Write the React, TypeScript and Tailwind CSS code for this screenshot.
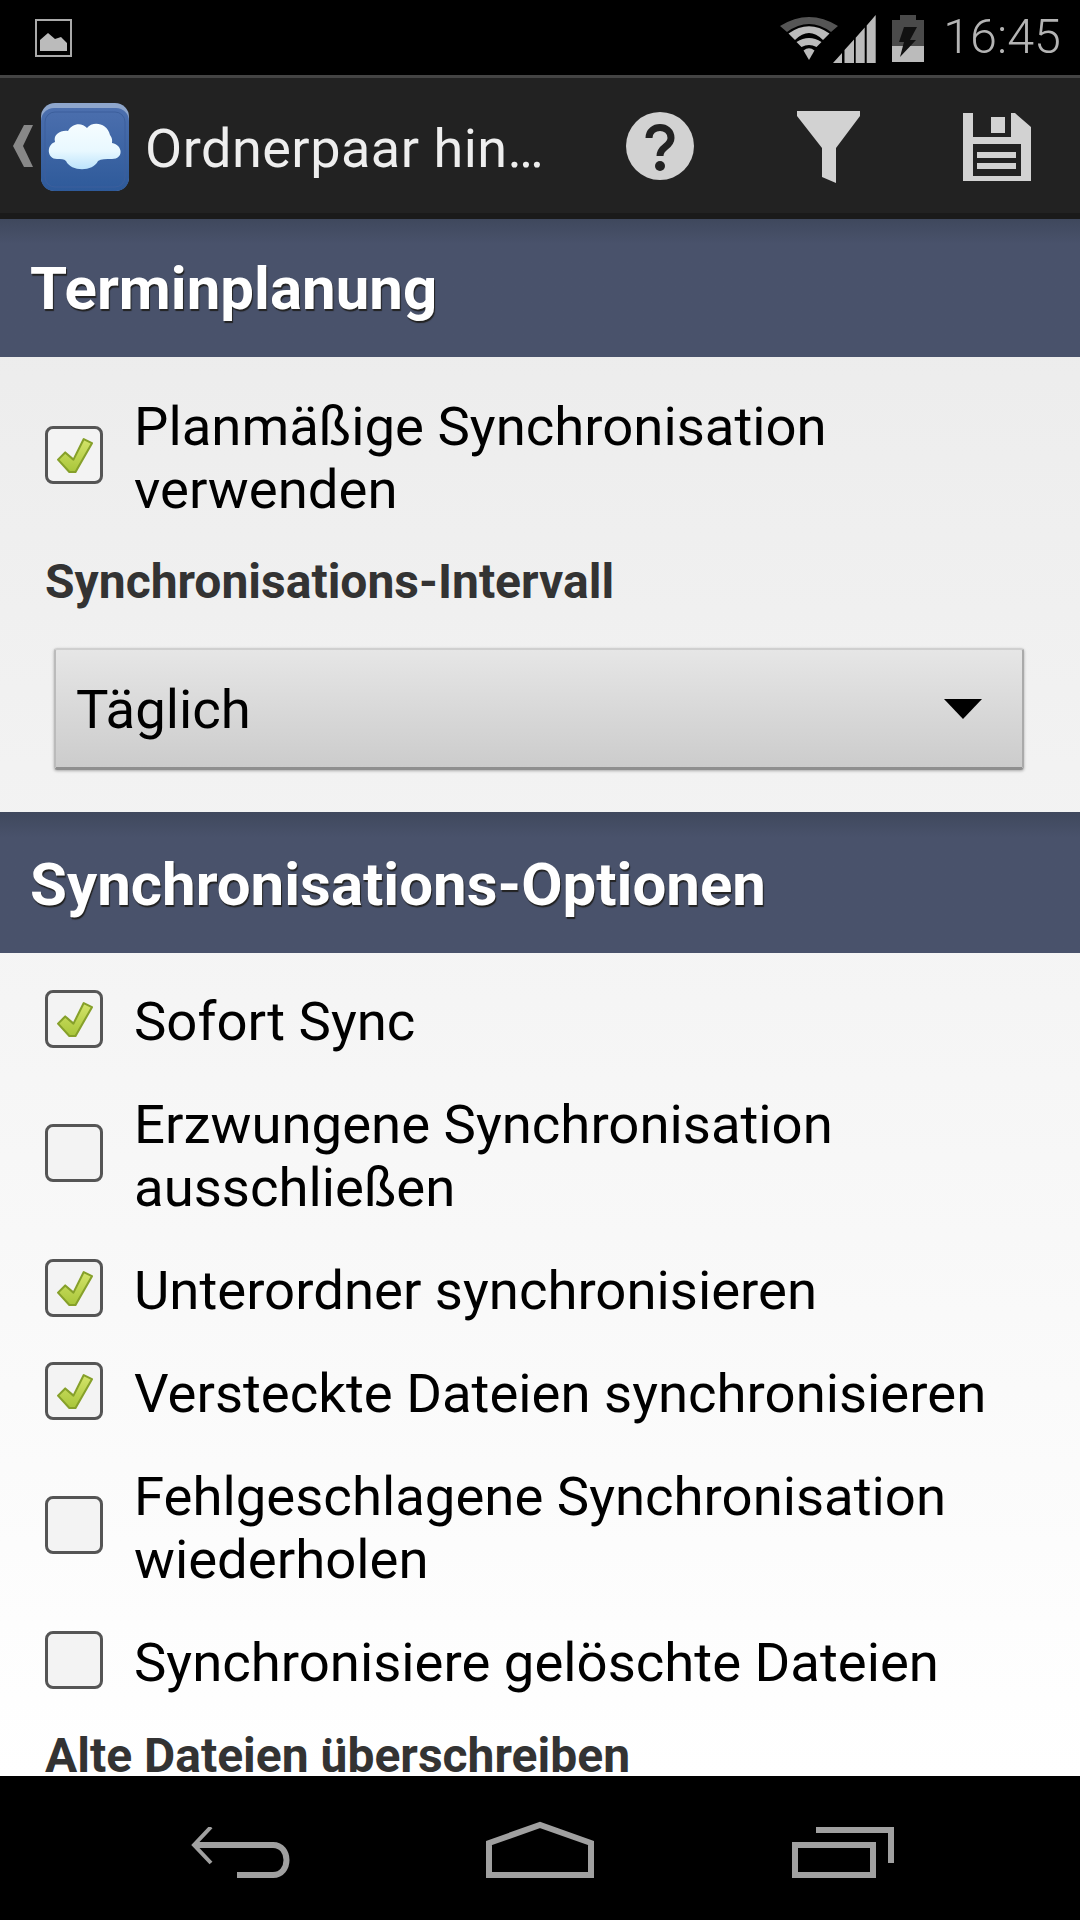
function CheckBox({ checked }: { checked?: boolean }) {
  return (
    <div className="w-[58px] h-[58px] mb-[6px] shrink-0 rounded-[8px] border-[3px] border-[#555] bg-[#f3f3f3] flex items-center justify-center">
      {checked && (
        <svg width="36" height="36" viewBox="0 0 35 35" className="ml-[1px]">
          <defs>
            <linearGradient id="chk" x1="0" y1="0" x2="0" y2="1">
              <stop offset="0" stopColor="#d4e46a" />
              <stop offset="1" stopColor="#a9c63a" />
            </linearGradient>
          </defs>
          <path
            d="M1 22 L8 15 L16 22 L26 2 L34 6 L18 34 L12 34 Z"
            fill="url(#chk)"
            stroke="#86a02a"
            strokeWidth="2"
            strokeLinejoin="round"
          />
        </svg>
      )}
    </div>
  );
}

function Row({ checked, lines }: { checked?: boolean; lines: string[] }) {
  return (
    <div className={`flex items-center gap-[31px] pl-[45px] ${lines.length > 1 ? "h-[166px]" : "h-[103px]"}`}>
      <CheckBox checked={checked} />
      <div className="text-[54.5px] leading-[63px] text-black whitespace-nowrap">
        {lines.map((l) => (
          <div key={l}>{l}</div>
        ))}
      </div>
    </div>
  );
}

function SectionHead({ title, h }: { title: string; h: string }) {
  return (
    <div className={`${h} shrink-0 flex items-center pl-[30px] bg-gradient-to-b from-[#3f485d] to-[#49526b] to-[18%]`}>
      <span className="text-[60px] font-bold text-white [text-shadow:1px_2px_1px_#222]">{title}</span>
    </div>
  );
}

function Label({ text }: { text: string }) {
  return <div className="pl-[45px] text-[48px] font-bold leading-[50px] text-[#333] whitespace-nowrap">{text}</div>;
}

export default function App() {
  return (
    <div className="w-[1080px] h-[1920px] flex flex-col overflow-hidden bg-black font-['Roboto',sans-serif]">
      {/* status bar */}
      <div className="h-[75px] shrink-0 bg-black flex items-center pl-[35px] pr-[19px]">
        <svg width="37" height="38" viewBox="0 0 37 38">
          <rect x="1" y="1" width="35" height="36" fill="none" stroke="#aaa" strokeWidth="2" />
          <path d="M5 32 V21 L13 14 L20 20 L26 18 L32 24 V32 Z" fill="#bbb" />
        </svg>
        <div className="ml-auto flex items-center">
          <svg width="58" height="43" viewBox="0 0 58 43" className="mb-[-1px]">
            <path d="M0 9 Q29 -9 58 9 L51 15 Q29 -1 7 15 Z" fill="#555" />
            <path d="M8.5 16.5 Q29 2 49.5 16.5 L43 23 Q29 9 15 23 Z" fill="#bbb" />
            <path d="M16.5 25 Q29 17 41.5 25 L36.5 30 Q29 26 21.5 30 Z" fill="#bbb" />
            <path d="M23.5 33.5 Q29 29 34.5 33.5 L29 43 Z" fill="#bbb" />
          </svg>
          <svg width="43" height="48" viewBox="0 0 43 48" className="ml-[-5px] mt-[2px]">
            <path
              d="M0 48 L9 38 V48 Z M11.5 35 L21 24.6 V48 H11.5 Z M22.7 22.7 L31.7 12.6 V48 H22.7 Z M33.7 10.4 L42.7 0 V48 H33.7 Z"
              fill="#bbb"
            />
          </svg>
          <svg width="32" height="47" viewBox="0 0 32 47" className="ml-[16px] mt-[2px]">
            <rect x="8" y="0" width="16" height="5" fill="#4a4a4a" />
            <rect x="0" y="5" width="32" height="26" fill="#4a4a4a" />
            <rect x="0" y="31" width="32" height="16" fill="#bbb" />
            <path d="M12 12 H25 L18 25 H24 L8 42 L12 27 H7 Z" fill="#111" />
          </svg>
          <span className="ml-[19px] text-[48.5px] font-light leading-none text-[#b4b4b4]">16:45</span>
        </div>
      </div>

      {/* action bar */}
      <div className="h-[144px] shrink-0 flex flex-col bg-[#222]">
        <div className="h-[3px] bg-[#444]" />
        <div className="flex-1 flex items-center pl-[13px]">
          <svg width="20" height="42" viewBox="0 0 20 42">
            <path d="M20 0 H11 L0 21 L11 42 H20 L10 21 Z" fill="#888" />
          </svg>
          <svg width="88" height="88" viewBox="0 0 88 88" className="ml-[8px] mt-[2px]">
            <defs>
              <linearGradient id="tile" x1="0" y1="0" x2="0" y2="1">
                <stop offset="0" stopColor="#4c6fae" />
                <stop offset="1" stopColor="#2e5a9a" />
              </linearGradient>
              <linearGradient id="cloud" x1="0" y1="0" x2="0" y2="1">
                <stop offset="0" stopColor="#f6fdff" />
                <stop offset="0.6" stopColor="#e8f8ff" />
                <stop offset="1" stopColor="#bce3fb" />
              </linearGradient>
            </defs>
            <rect x="0" y="0" width="88" height="88" rx="14" fill="#8ea6cc" />
            <rect x="0" y="5" width="88" height="83" rx="13" fill="url(#tile)" />
            <rect x="4" y="9" width="80" height="75" rx="10" fill="none" stroke="#3c5f9c" strokeWidth="1" />
            <path
              d="M16 56 C6 56 5 42 14 39 C12 31 20 27 27 28 C31 20 41 19 46 25 C51 18 66 19 69 32 C72 36 71 39 71 40 C82 42 83 56 71 56 C65 56 60 56 57 58 C52 69 30 69 25 58 C23 56 20 56 16 56 Z"
              fill="url(#cloud)"
            />
          </svg>
          <span className="ml-[16px] mt-[6px] text-[54px] leading-none text-[#eee] tracking-[0.5px] whitespace-nowrap">
            Ordnerpaar hin…
          </span>
          <div className="ml-auto flex items-center pr-[49px]">
            <svg width="68" height="68" viewBox="0 0 68 68">
              <circle cx="34" cy="34" r="34" fill="#d2d2d2" />
              <path d="M23 26 C23 12 45 12 45 26 C45 35 34 34 34 44" fill="none" stroke="#222" strokeWidth="7" />
              <circle cx="34" cy="54" r="5" fill="#222" />
            </svg>
            <svg width="63" height="72" viewBox="0 0 63 72" className="ml-[103px] mt-[3px]">
              <path d="M0 0 H63 V5 L39 37 V72 L25 66 V37 L0 5 Z" fill="#d2d2d2" />
            </svg>
            <svg width="68" height="68" viewBox="0 0 68 68" className="ml-[103px] mt-[3px]">
              <path
                fillRule="evenodd"
                d="M0 0 H10 V24 H48 V0 H52 L68 14 V68 H0 Z M10 31 V63 H58 V31 Z"
                fill="#d2d2d2"
              />
              <rect x="28" y="4" width="14" height="16" fill="#d2d2d2" />
              <rect x="14" y="39" width="39" height="6" fill="#d2d2d2" />
              <rect x="14" y="50" width="39" height="6" fill="#d2d2d2" />
            </svg>
          </div>
        </div>
        <div className="h-[6px] bg-[#1a1a1a]" />
      </div>

      {/* form */}
      <div className="flex-1 min-h-0 overflow-hidden bg-gradient-to-b from-[#ebebeb] to-white">
        <SectionHead title="Terminplanung" h="h-[138px] pt-[2px]" />
        <div className="pt-[18px] h-[455px]">
          <Row checked lines={["Planmäßige Synchronisation", "verwenden"]} />
          <div className="mt-[16px]">
            <Label text="Synchronisations-Intervall" />
          </div>
          <div className="mx-[54px] mt-[41px] w-[970px] h-[122px] pt-[3px] rounded-[3px] border-t-2 border-t-[#cfcfcf] border-b-[3px] border-b-[#8f8f8f] border-r-2 border-r-[#aaa] border-l-2 border-l-[#bbb] bg-gradient-to-b from-[#e6e6e6] to-[#cccccc] shadow-[0_1px_3px_rgba(0,0,0,0.3)] flex items-center pl-[20px] pr-[40px] text-[54.5px] text-black">
            <span>Täglich</span>
            <svg width="38" height="20" viewBox="0 0 38 20" className="ml-auto mb-[3px]">
              <path d="M0 0 H38 L19 20 Z" fill="#000" />
            </svg>
          </div>
        </div>
        <SectionHead title="Synchronisations-Optionen" h="h-[141px] pt-[5px]" />
        <div className="pt-[17px]">
          <Row checked lines={["Sofort Sync"]} />
          <Row lines={["Erzwungene Synchronisation", "ausschließen"]} />
          <Row checked lines={["Unterordner synchronisieren"]} />
          <Row checked lines={["Versteckte Dateien synchronisieren"]} />
          <Row lines={["Fehlgeschlagene Synchronisation", "wiederholen"]} />
          <Row lines={["Synchronisiere gelöschte Dateien"]} />
          <div className="mt-[17px]">
            <Label text="Alte Dateien überschreiben" />
          </div>
        </div>
      </div>

      {/* nav bar */}
      <div className="h-[144px] shrink-0 bg-black flex items-start pl-[191px] pt-[45px]">
        <svg width="100" height="51" viewBox="0 0 100 51" className="mt-[6px]">
          <path d="M20 0 L3 18 L20 36" fill="none" stroke="#a0a0a0" strokeWidth="4" />
          <path d="M3 18 H82 C100 18 100 48 82 48 H46" fill="none" stroke="#a0a0a0" strokeWidth="6" />
        </svg>
        <svg width="108" height="57" viewBox="0 0 108 57" className="ml-[195px]">
          <path d="M3 54 V22 L54 4 L105 22 V54 Z" fill="none" stroke="#a0a0a0" strokeWidth="6" />
        </svg>
        <svg width="102" height="51" viewBox="0 0 102 51" className="ml-[198px] mt-[6px]">
          <rect x="3" y="18" width="78" height="30" fill="none" stroke="#a0a0a0" strokeWidth="6" />
          <path d="M24 3 H99 V36" fill="none" stroke="#a0a0a0" strokeWidth="6" />
        </svg>
      </div>
    </div>
  );
}
